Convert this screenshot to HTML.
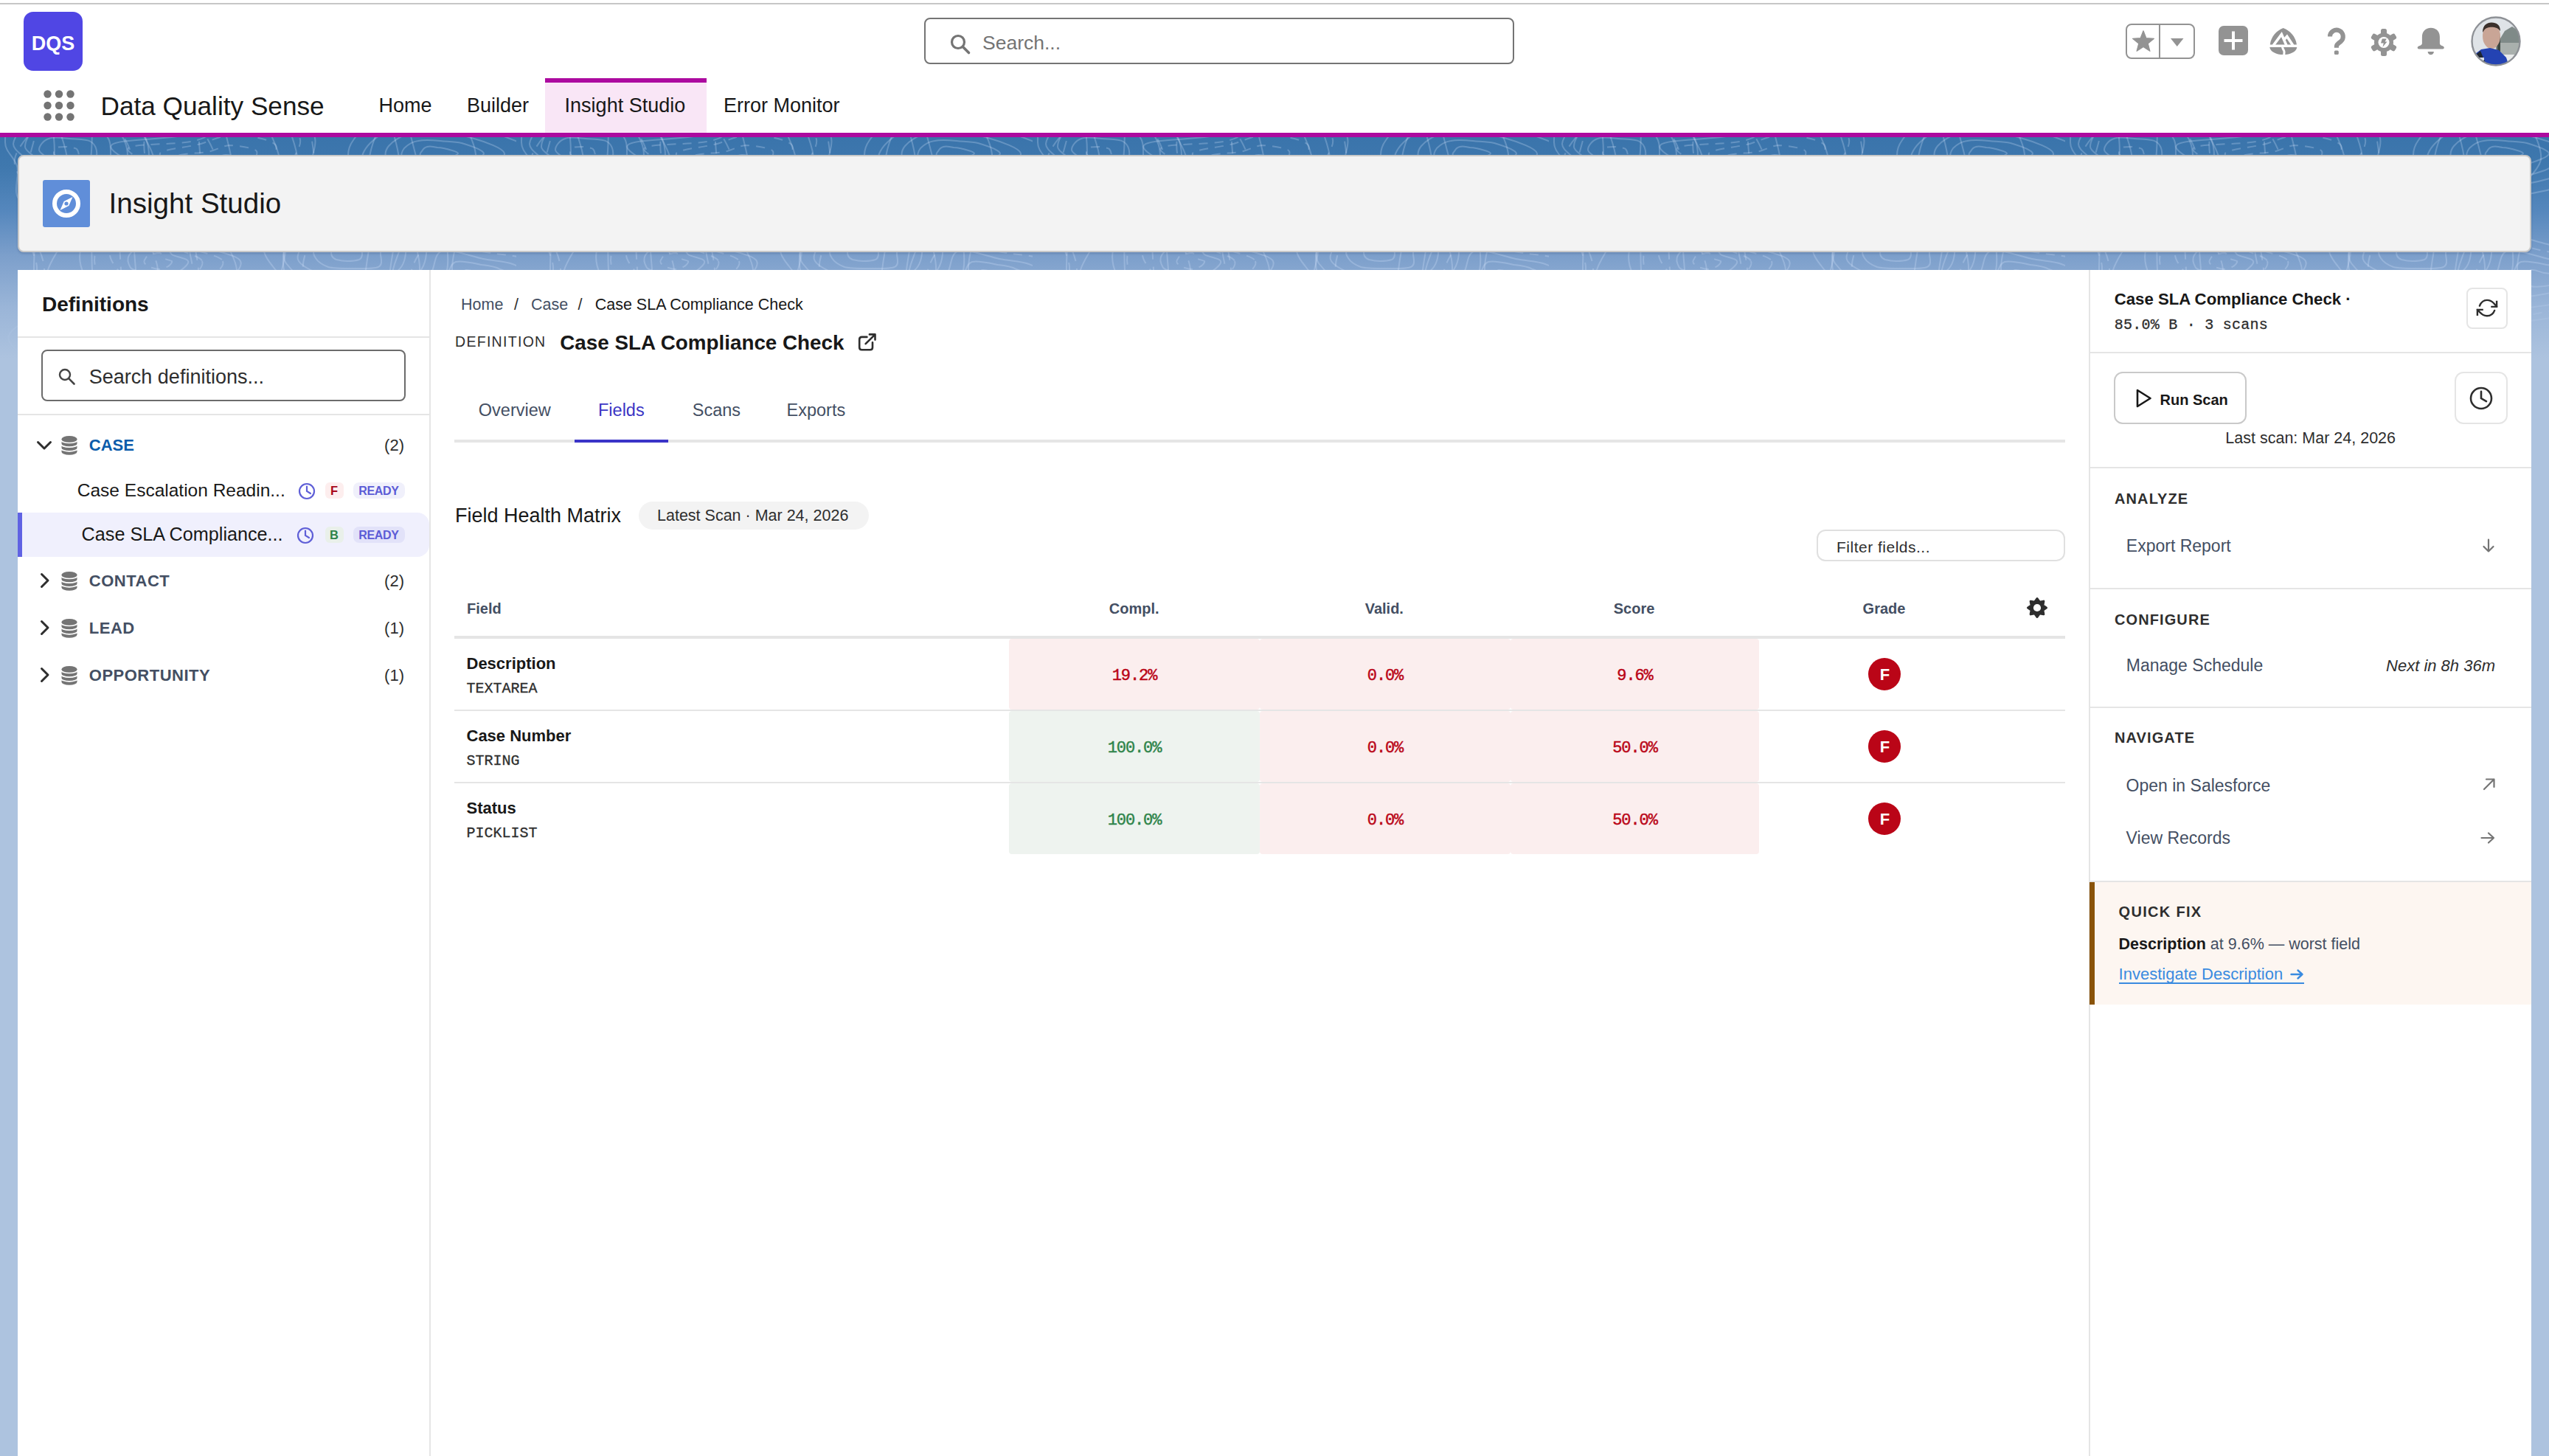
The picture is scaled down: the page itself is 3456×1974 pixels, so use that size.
<!DOCTYPE html>
<html><head><meta charset="utf-8"><title>Insight Studio</title>
<style>
html,body{margin:0;padding:0;}
body{width:3456px;height:1974px;position:relative;overflow:hidden;background:#fff;font-family:"Liberation Sans", sans-serif;}
.t{position:absolute;white-space:nowrap;line-height:1;}
svg{overflow:visible;}
@media (max-width: 2400px){body{zoom:0.5;}}
</style></head><body>
<div style="position:absolute;left:0px;top:186px;width:3456px;height:1788px;background:linear-gradient(180deg,#3a74ab 0px,#3f78ae 40px,#5587bd 100px,#7c9fcb 160px,#9ab5d8 230px,#adc3df 300px,#adc3df 1788px);"></div>
<div style="position:absolute;left:0px;top:0px;width:3456px;height:180px;background:#fff;"></div>
<div style="position:absolute;left:0px;top:4px;width:3456px;height:2px;background:#c6c6c6;"></div>
<div style="position:absolute;left:0px;top:180px;width:3456px;height:6px;background:#ac0a9f;"></div>
<svg style="position:absolute;left:0;top:186px" width="3456" height="300"><defs><pattern id="topo" x="0" y="0" width="700" height="300" patternUnits="userSpaceOnUse"><g fill="none" stroke="#d8e8ff" stroke-opacity="0.26" stroke-width="2"><path d="M107 25 C106 28 105 31 103 33 C100 35 95 36 91 36 C86 37 79 38 77 36 C75 34 78 30 77 27 C76 25 73 24 73 22 C73 19 74 15 77 14 C80 13 86 13 91 13 C95 14 101 14 104 16 C106 18 107 22 107 25 Z" stroke-dasharray="12 9"/><path d="M131 25 C130 31 126 38 120 42 C114 46 104 49 95 50 C86 51 71 51 66 48 C61 44 67 35 65 30 C63 25 53 22 53 17 C53 12 59 4 66 2 C73 -1 84 1 94 2 C103 3 117 2 123 6 C130 10 132 19 131 25 Z"/><path d="M150 25 C150 35 152 48 144 54 C135 61 114 62 98 63 C83 65 60 68 52 63 C45 58 55 41 52 33 C49 25 34 20 34 13 C34 5 41 -9 52 -13 C63 -18 83 -16 98 -14 C113 -12 134 -10 142 -4 C151 3 150 15 150 25 Z"/><path d="M173 25 C173 37 168 52 156 60 C144 69 120 72 101 74 C83 76 54 78 44 72 C34 65 43 46 39 36 C35 25 18 19 18 9 C19 -0 30 -16 44 -22 C58 -28 83 -27 102 -26 C120 -24 144 -19 156 -11 C168 -3 173 13 173 25 Z"/><path d="M202 25 C201 41 193 61 177 72 C161 82 130 86 105 88 C81 91 43 96 29 87 C15 79 27 53 23 39 C19 26 7 20 7 7 C7 -7 8 -36 25 -43 C41 -49 78 -36 104 -33 C130 -30 163 -33 179 -23 C195 -13 202 9 202 25 Z"/><path d="M321 36 C321 38 322 41 319 42 C316 44 308 43 304 43 C299 43 296 43 293 42 C289 42 288 40 285 38 C282 37 272 33 273 31 C274 29 286 29 292 28 C297 27 301 24 306 24 C311 24 319 26 321 28 C324 30 322 33 321 36 Z"/><path d="M343 36 C342 41 345 48 339 50 C333 53 317 51 307 51 C298 51 289 52 282 51 C275 49 272 46 265 42 C258 38 237 29 240 26 C242 22 269 22 281 20 C293 18 300 12 311 11 C321 11 341 14 347 18 C352 22 344 30 343 36 Z" stroke-dasharray="12 9"/><path d="M366 36 C363 44 367 53 358 58 C349 62 325 60 310 60 C296 60 283 61 272 59 C261 56 256 51 247 45 C238 39 214 28 217 22 C221 16 252 14 268 10 C285 6 299 -3 316 -3 C333 -3 364 2 372 9 C380 15 368 28 366 36 Z" stroke-dasharray="12 9"/><path d="M395 36 C392 48 399 63 386 68 C372 73 333 68 313 67 C293 67 279 68 265 64 C251 61 245 56 229 48 C214 39 168 22 174 15 C179 8 238 11 263 5 C287 0 298 -15 321 -16 C345 -18 390 -12 403 -3 C415 6 398 24 395 36 Z" stroke-dasharray="12 9"/><path d="M422 36 C420 50 427 70 409 77 C392 84 343 77 317 77 C291 76 271 78 253 74 C235 69 227 61 210 51 C193 40 144 20 151 11 C158 2 222 4 252 -3 C281 -10 300 -32 328 -33 C356 -34 404 -21 420 -10 C435 2 423 21 422 36 Z"/><path d="M621 22 C621 24 612 27 607 29 C603 30 599 31 594 32 C589 33 581 33 577 32 C573 31 571 27 570 25 C569 23 570 21 572 19 C573 17 575 14 579 13 C582 12 589 13 593 14 C598 14 601 15 606 16 C610 17 621 20 621 22 Z"/><path d="M656 22 C656 27 637 33 628 36 C618 40 610 43 599 44 C588 46 570 47 561 45 C552 42 547 34 545 29 C543 24 545 19 548 15 C552 11 559 6 567 5 C576 3 587 4 597 5 C606 6 616 6 626 8 C636 11 655 17 656 22 Z"/><path d="M684 22 C686 29 663 39 650 45 C636 50 621 54 603 56 C586 58 560 60 546 56 C533 52 528 40 525 33 C521 25 522 18 527 12 C532 6 543 -2 556 -5 C568 -8 586 -6 601 -5 C615 -4 629 -3 643 2 C657 6 683 15 684 22 Z"/><path d="M724 22 C725 32 689 45 669 52 C650 59 630 63 607 66 C584 69 550 73 531 68 C511 64 497 48 492 38 C487 28 494 16 502 8 C511 -1 526 -11 543 -15 C560 -18 584 -17 605 -15 C625 -14 646 -13 666 -7 C686 -0 724 12 724 22 Z"/><path d="M766 22 C768 34 718 51 692 60 C666 70 641 76 612 79 C583 82 539 86 516 79 C494 73 482 53 476 41 C470 28 471 15 479 4 C487 -8 504 -24 526 -28 C547 -32 581 -25 608 -23 C634 -20 657 -21 684 -13 C710 -6 765 10 766 22 Z"/><path d="M233 168 C234 170 230 174 228 175 C225 177 221 179 217 179 C213 179 209 178 206 177 C202 176 198 174 197 172 C195 170 195 167 197 165 C198 162 201 160 205 159 C208 158 214 157 217 157 C220 158 220 162 222 164 C225 166 232 167 233 168 Z" stroke-dasharray="12 9"/><path d="M255 168 C257 172 247 179 242 183 C236 186 228 191 220 191 C213 192 205 188 198 185 C190 183 181 181 177 177 C174 172 172 165 175 160 C178 155 186 150 194 147 C202 145 215 142 221 143 C228 145 227 154 233 159 C239 163 254 164 255 168 Z"/><path d="M274 168 C277 175 266 185 258 191 C250 197 236 203 224 204 C212 205 198 200 188 196 C177 192 167 187 160 180 C154 173 146 161 150 154 C154 147 172 141 184 137 C197 134 214 130 224 133 C234 136 237 147 245 153 C253 158 272 162 274 168 Z" stroke-dasharray="12 9"/><path d="M302 168 C306 177 285 190 273 199 C261 207 245 217 228 219 C212 220 191 214 176 209 C160 203 142 196 134 186 C127 176 126 161 132 150 C138 140 155 129 171 124 C187 118 215 112 229 116 C243 120 242 139 254 148 C267 156 299 160 302 168 Z" stroke-dasharray="12 9"/><path d="M326 168 C331 179 306 197 291 208 C275 219 254 233 233 235 C212 237 185 227 166 219 C146 212 125 202 117 190 C108 178 105 159 112 146 C119 133 140 118 160 111 C179 105 214 103 231 108 C248 114 247 133 263 143 C279 153 322 158 326 168 Z"/><path d="M491 158 C491 160 491 164 487 166 C484 167 476 168 471 168 C466 168 460 167 456 166 C453 165 451 163 450 161 C449 159 449 157 449 155 C449 152 448 147 452 146 C455 145 464 148 470 149 C477 149 485 148 488 150 C491 151 491 155 491 158 Z"/><path d="M516 158 C516 164 520 172 513 176 C506 179 486 178 475 178 C463 178 452 178 445 176 C437 173 431 169 428 164 C425 160 424 156 426 151 C427 146 430 137 438 135 C446 133 462 137 475 138 C487 138 506 137 512 140 C519 144 516 152 516 158 Z"/><path d="M550 158 C549 167 546 179 534 184 C522 189 495 188 478 188 C462 188 445 188 433 185 C421 181 409 174 405 168 C401 162 406 156 408 148 C410 140 407 123 419 119 C431 116 458 125 479 127 C499 129 529 124 541 129 C553 135 551 149 550 158 Z"/><path d="M578 158 C577 170 572 185 556 192 C541 200 506 201 484 201 C461 202 436 200 420 195 C404 190 394 179 388 171 C383 163 384 155 387 144 C389 134 389 113 405 108 C421 103 457 114 483 116 C510 118 548 113 564 120 C580 127 579 146 578 158 Z"/><path d="M607 158 C608 173 608 196 587 204 C567 212 516 207 486 207 C456 207 428 210 409 204 C389 199 377 185 369 174 C360 163 355 154 358 140 C360 125 360 96 382 90 C403 84 454 101 487 105 C521 109 562 105 581 114 C601 122 606 143 607 158 Z"/><path d="M668 192 C669 194 668 197 664 199 C661 201 655 201 649 202 C644 202 636 204 632 202 C629 201 628 197 627 195 C626 192 625 191 626 188 C627 186 628 181 632 180 C636 179 644 183 649 184 C653 185 657 184 660 186 C663 187 668 189 668 192 Z"/><path d="M698 192 C699 196 691 203 683 206 C676 210 665 210 653 212 C642 214 625 218 616 216 C608 213 604 204 603 199 C601 194 604 190 607 185 C610 180 611 171 618 169 C626 167 643 171 653 173 C663 174 671 175 678 179 C686 182 697 187 698 192 Z"/><path d="M721 192 C723 199 717 210 707 216 C697 222 677 224 659 227 C641 229 611 235 598 231 C585 227 583 211 581 203 C579 194 583 189 586 181 C590 173 589 157 600 154 C612 151 640 162 655 165 C671 168 684 168 695 172 C706 176 719 184 721 192 Z"/><path d="M758 192 C760 201 738 214 722 222 C706 229 685 231 662 235 C638 239 598 249 582 244 C565 239 569 217 565 205 C561 194 555 187 559 177 C563 166 571 147 588 144 C604 141 638 153 659 156 C680 160 696 159 712 165 C729 171 757 182 758 192 Z" stroke-dasharray="12 9"/><path d="M776 192 C779 203 763 222 745 231 C727 240 694 241 665 244 C637 248 595 256 574 250 C553 244 544 223 538 210 C531 197 530 186 535 172 C540 159 546 132 568 128 C589 123 636 142 662 147 C689 153 708 152 727 159 C746 167 773 180 776 192 Z"/><path d="M151 290 C150 292 144 295 140 296 C137 297 133 296 128 297 C124 298 117 301 114 300 C111 299 112 295 111 293 C110 290 106 288 107 286 C108 284 112 283 116 281 C120 280 126 277 130 277 C135 278 139 281 142 283 C146 285 151 288 151 290 Z" stroke-dasharray="12 9"/><path d="M183 290 C182 295 166 301 157 303 C149 306 141 303 131 305 C122 306 107 313 101 312 C95 310 98 300 96 295 C93 290 83 286 84 282 C86 278 95 273 104 270 C112 267 125 263 135 264 C145 264 154 270 162 274 C170 279 183 285 183 290 Z"/><path d="M208 290 C208 297 188 307 175 311 C163 315 149 311 134 313 C119 315 97 326 87 324 C78 321 84 306 79 298 C75 291 60 285 62 278 C63 271 77 264 90 258 C104 253 126 245 141 247 C155 249 166 261 177 268 C188 275 209 283 208 290 Z" stroke-dasharray="12 9"/><path d="M248 290 C246 300 210 312 191 318 C173 323 157 322 138 324 C119 327 91 336 78 332 C65 328 65 312 58 302 C51 293 32 282 36 273 C40 265 64 258 82 251 C101 245 126 234 145 235 C164 236 182 250 199 259 C216 268 249 280 248 290 Z"/><path d="M267 290 C265 302 223 315 202 322 C181 330 165 329 141 333 C118 338 78 351 61 347 C44 342 46 319 38 306 C30 293 7 280 12 269 C16 257 43 245 66 237 C89 229 126 216 151 219 C176 221 198 239 217 251 C237 263 270 278 267 290 Z"/><path d="M431 298 C430 300 429 301 426 303 C424 304 421 306 418 306 C414 306 411 305 407 304 C402 303 392 304 390 302 C388 300 393 297 395 295 C397 292 398 288 402 288 C406 287 412 290 417 291 C422 292 429 290 432 291 C434 292 432 296 431 298 Z" stroke-dasharray="12 9"/><path d="M449 298 C448 302 445 305 440 308 C435 311 428 314 421 315 C414 316 408 313 398 311 C388 310 366 310 361 307 C357 303 366 295 370 290 C375 286 380 279 389 277 C397 276 410 281 421 282 C431 283 445 282 450 284 C454 287 451 294 449 298 Z"/><path d="M471 298 C469 304 464 309 456 314 C448 319 436 324 425 325 C413 326 401 323 386 321 C371 318 341 317 334 311 C327 306 338 294 345 286 C351 278 360 267 373 265 C386 263 407 272 424 274 C440 276 463 272 471 276 C479 280 474 292 471 298 Z" stroke-dasharray="12 9"/><path d="M486 298 C482 306 475 312 465 318 C456 324 442 332 428 334 C414 335 402 328 381 325 C360 322 312 324 301 317 C290 310 307 292 316 281 C326 271 340 255 358 253 C377 250 404 264 426 267 C448 270 479 264 489 269 C499 274 490 290 486 298 Z"/><path d="M512 298 C507 309 499 318 485 325 C472 333 450 341 431 342 C412 344 398 336 371 333 C343 330 280 332 266 323 C253 314 279 291 291 277 C304 263 318 242 341 239 C364 236 400 255 429 258 C458 262 501 252 514 259 C528 266 517 287 512 298 Z" stroke-dasharray="12 9"/><path d="M53 -20 C50 -12 44 13 39 30 C35 47 25 63 26 80 C27 97 39 113 44 130 C50 147 60 163 60 180 C60 197 47 213 43 230 C39 247 40 263 37 280 C35 297 30 322 28 330 " stroke-dasharray="16 10"/><path d="M629 -20 C632 -12 647 13 645 30 C642 47 617 63 613 80 C609 97 620 113 620 130 C620 147 612 163 613 180 C614 197 625 213 625 230 C626 247 614 263 613 280 C612 297 619 322 620 330 "/><path d="M198 -20 C198 -12 192 13 198 30 C203 47 230 63 231 80 C232 97 205 113 203 130 C200 147 213 163 214 180 C216 197 211 213 211 230 C211 247 217 263 215 280 C213 297 202 322 199 330 " stroke-dasharray="16 10"/><path d="M77 -20 C79 -12 90 13 91 30 C91 47 80 63 79 80 C79 97 91 113 88 130 C86 147 70 163 65 180 C60 197 56 213 58 230 C60 247 74 263 77 280 C80 297 75 322 75 330 "/><path d="M268 -20 C269 -12 270 13 272 30 C273 47 281 63 279 80 C276 97 259 113 257 130 C254 147 259 163 262 180 C265 197 277 213 275 230 C274 247 258 263 254 280 C249 297 250 322 250 330 " stroke-dasharray="16 10"/><path d="M71 -20 C71 -12 76 13 73 30 C70 47 59 63 55 80 C50 97 49 113 48 130 C47 147 46 163 46 180 C47 197 52 213 52 230 C52 247 45 263 46 280 C47 297 57 322 59 330 "/><path d="M156 -20 C160 -12 179 13 179 30 C179 47 159 63 155 80 C152 97 160 113 161 130 C162 147 163 163 164 180 C165 197 168 213 167 230 C166 247 157 263 157 280 C158 297 167 322 169 330 " stroke-dasharray="16 10"/><path d="M529 -20 C531 -12 540 13 541 30 C541 47 533 63 532 80 C531 97 536 113 536 130 C535 147 531 163 529 180 C527 197 523 213 525 230 C526 247 537 263 538 280 C539 297 533 322 532 330 "/><path d="M517 -20 C514 -12 501 13 501 30 C502 47 520 63 521 80 C522 97 509 113 505 130 C501 147 498 163 496 180 C494 197 494 213 494 230 C494 247 497 263 498 280 C499 297 501 322 501 330 "/><path d="M184 -20 C188 -12 206 13 209 30 C212 47 206 63 202 80 C198 97 186 113 183 130 C180 147 183 163 184 180 C184 197 185 213 187 230 C188 247 190 263 195 280 C199 297 210 322 213 330 "/><path d="M419 -20 C420 -12 425 13 426 30 C427 47 424 63 423 80 C423 97 424 113 422 130 C420 147 409 163 411 180 C412 197 427 213 431 230 C436 247 439 263 440 280 C441 297 437 322 437 330 " stroke-dasharray="16 10"/><path d="M359 -20 C363 -12 377 13 379 30 C380 47 368 63 369 80 C371 97 385 113 387 130 C389 147 387 163 382 180 C377 197 360 213 357 230 C355 247 360 263 365 280 C369 297 383 322 386 330 "/><path d="M302 -20 C304 -12 311 13 314 30 C317 47 321 63 320 80 C318 97 305 113 305 130 C305 147 320 163 321 180 C321 197 313 213 307 230 C302 247 288 263 290 280 C291 297 311 322 315 330 "/><path d="M54 -20 C48 -12 22 13 20 30 C17 47 37 63 39 80 C42 97 34 113 36 130 C38 147 51 163 50 180 C50 197 37 213 33 230 C29 247 27 263 26 280 C26 297 28 322 29 330 " stroke-dasharray="16 10"/><path d="M389 -20 C391 -12 403 13 403 30 C402 47 387 63 384 80 C382 97 388 113 388 130 C388 147 381 163 385 180 C388 197 408 213 411 230 C415 247 407 263 406 280 C405 297 406 322 406 330 "/><path d="M268 -20 C272 -12 290 13 293 30 C295 47 285 63 280 80 C275 97 266 113 264 130 C262 147 268 163 269 180 C269 197 263 213 266 230 C269 247 284 263 288 280 C293 297 294 322 295 330 " stroke-dasharray="16 10"/><path d="M552 -20 C554 -12 561 13 565 30 C568 47 571 63 571 80 C571 97 563 113 562 130 C562 147 570 163 569 180 C567 197 558 213 553 230 C549 247 539 263 540 280 C541 297 555 322 558 330 "/><path d="M125 -20 C125 -12 125 13 123 30 C121 47 112 63 112 80 C112 97 120 113 123 130 C125 147 124 163 125 180 C126 197 127 213 128 230 C130 247 137 263 137 280 C136 297 128 322 126 330 "/></g></pattern><linearGradient id="fade" x1="0" y1="0" x2="0" y2="1"><stop offset="0" stop-color="#fff"/><stop offset="0.6" stop-color="#fff"/><stop offset="1" stop-color="#000"/></linearGradient><mask id="fm"><rect width="3456" height="300" fill="url(#fade)"/></mask></defs><rect width="3456" height="300" fill="url(#topo)" mask="url(#fm)"/></svg>
<div style="position:absolute;left:32px;top:16px;width:80px;height:80px;background:#5046e4;border-radius:13px;"></div>
<div class="t" style="left:-928px;width:2000px;text-align:center;top:46.43px;font-size:27px;color:#fff;font-weight:700;font-family:'Liberation Sans', sans-serif;letter-spacing:0px;font-style:normal;">DQS</div>
<svg style="position:absolute;left:59px;top:122px;" width="42" height="42" viewBox="0 0 42 42"><circle cx="5.5" cy="5.5" r="5.2" fill="#747474"/><circle cx="5.5" cy="21" r="5.2" fill="#747474"/><circle cx="5.5" cy="36.5" r="5.2" fill="#747474"/><circle cx="21" cy="5.5" r="5.2" fill="#747474"/><circle cx="21" cy="21" r="5.2" fill="#747474"/><circle cx="21" cy="36.5" r="5.2" fill="#747474"/><circle cx="36.5" cy="5.5" r="5.2" fill="#747474"/><circle cx="36.5" cy="21" r="5.2" fill="#747474"/><circle cx="36.5" cy="36.5" r="5.2" fill="#747474"/></svg>
<div class="t" style="left:136.5px;top:125.96px;font-size:35.2px;color:#181818;font-weight:400;font-family:'Liberation Sans', sans-serif;letter-spacing:0px;font-style:normal;">Data Quality Sense</div>
<div style="position:absolute;left:739px;top:106px;width:219px;height:6px;background:#ac0a9f;"></div>
<div style="position:absolute;left:739px;top:112px;width:219px;height:68px;background:#f9e6f6;"></div>
<div class="t" style="left:513.5px;top:130.32px;font-size:27px;color:#181818;font-weight:400;font-family:'Liberation Sans', sans-serif;letter-spacing:0px;font-style:normal;">Home</div>
<div class="t" style="left:633px;top:130.32px;font-size:27px;color:#181818;font-weight:400;font-family:'Liberation Sans', sans-serif;letter-spacing:0px;font-style:normal;">Builder</div>
<div class="t" style="left:765.6px;top:130.32px;font-size:27px;color:#181818;font-weight:400;font-family:'Liberation Sans', sans-serif;letter-spacing:0px;font-style:normal;">Insight Studio</div>
<div class="t" style="left:981px;top:130.32px;font-size:27px;color:#181818;font-weight:400;font-family:'Liberation Sans', sans-serif;letter-spacing:0px;font-style:normal;">Error Monitor</div>
<div style="position:absolute;left:1253px;top:24px;width:800px;height:63px;box-sizing:border-box;border:2px solid #747474;border-radius:8px;background:#fff;"></div>
<svg style="position:absolute;left:1288px;top:46px;" width="28" height="26" viewBox="0 0 28 26"><circle cx="11" cy="11" r="8.5" fill="none" stroke="#747474" stroke-width="3.2"/><line x1="17.5" y1="17.5" x2="25.5" y2="25.5" stroke="#747474" stroke-width="3.6" stroke-linecap="round"/></svg>
<div class="t" style="left:1332px;top:45.14px;font-size:26.5px;color:#747474;font-weight:400;font-family:'Liberation Sans', sans-serif;letter-spacing:0px;font-style:normal;">Search...</div>
<div style="position:absolute;left:2882px;top:32px;width:94px;height:48px;box-sizing:border-box;border:2px solid #939393;border-radius:8px;"></div>
<div style="position:absolute;left:2927px;top:32px;width:2px;height:48px;background:#939393;"></div>
<svg style="position:absolute;left:2891px;top:41px;" width="30" height="30" viewBox="0 0 30 30"><path d="M15.00 0.80 L18.88 10.66 L29.46 11.30 L21.28 18.04 L23.93 28.30 L15.00 22.60 L6.07 28.30 L8.72 18.04 L0.54 11.30 L11.12 10.66 Z" fill="#939393" stroke="#939393" stroke-width="1.2" stroke-linejoin="round"/></svg>
<svg style="position:absolute;left:2943px;top:52px;" width="18" height="12" viewBox="0 0 18 12"><path d="M0 0 L17.5 0 L8.75 11 Z" fill="#939393"/></svg>
<svg style="position:absolute;left:3008px;top:35px;" width="40" height="40" viewBox="0 0 40 40"><rect x="0" y="0" width="40" height="40" rx="7" fill="#939393"/><rect x="18" y="7.5" width="4" height="25" fill="#fff"/><rect x="7.5" y="18" width="25" height="4" fill="#fff"/></svg>
<svg style="position:absolute;left:3077px;top:37px;" width="38" height="38" viewBox="0 0 38 38"><path d="M0.8 23.6 C2 12.5 9.5 4.5 18.7 1 C27.9 4.5 35.6 12.5 36.9 23.6 Z" fill="#939393"/><path d="M0.3 26.9 L37.3 26.9 C36.5 33 28.5 37 18.7 37 C9 37 1.2 33 0.3 26.9 Z" fill="#939393"/><path d="M5.3 24.5 L16.4 9.6 L23 24.5 M19.6 17 L23.8 12.4 L31.8 24.5" fill="none" stroke="#fff" stroke-width="3.6" stroke-linejoin="miter"/><path d="M17.6 26 C17 29 19.8 30.5 20 33 C20.2 35 19.6 36 19.8 38" fill="none" stroke="#fff" stroke-width="3"/></svg>
<svg style="position:absolute;left:3150px;top:30px;" width="40" height="50" viewBox="0 0 40 50"><path d="M9 19.6 A8.9 8.9 0 1 1 23.6 26.4 C20.5 28.5 17.9 30 17.9 33 L17.9 34.8" fill="none" stroke="#939393" stroke-width="6.1"/><rect x="14.9" y="38.6" width="5.9" height="5.5" rx="1.6" fill="#939393"/></svg>
<svg style="position:absolute;left:3214px;top:39px;" width="36" height="38" viewBox="0 0 36 38"><g fill="#939393"><rect x="14" y="0" width="8" height="9" rx="2.5" transform="rotate(0 18 18.5)"/><rect x="14" y="0" width="8" height="9" rx="2.5" transform="rotate(60 18 18.5)"/><rect x="14" y="0" width="8" height="9" rx="2.5" transform="rotate(120 18 18.5)"/><rect x="14" y="0" width="8" height="9" rx="2.5" transform="rotate(180 18 18.5)"/><rect x="14" y="0" width="8" height="9" rx="2.5" transform="rotate(240 18 18.5)"/><rect x="14" y="0" width="8" height="9" rx="2.5" transform="rotate(300 18 18.5)"/><circle cx="18" cy="18.5" r="13"/></g><circle cx="18" cy="18.5" r="7.5" fill="#fff"/><path d="M15.8 13.4 L21.8 13.4 L19.6 17.6 L22.5 17.6 L16.5 24.8 L17.8 19.6 L14 19.6 Z" fill="#939393"/></svg>
<svg style="position:absolute;left:3277px;top:37px;" width="38" height="38" viewBox="0 0 38 38"><path d="M18.9 0.8 C11.5 0.8 6.9 6 6.9 13 L6.9 22 C6.9 23.5 5 24.5 3 25.3 C1.5 25.8 0.7 26.7 0.7 27.6 C0.7 28.8 1.5 29.5 2.8 29.5 L34.8 29.5 C36 29.5 36.8 28.8 36.8 27.6 C36.8 26.7 36 25.8 34.6 25.3 C32.6 24.5 30.9 23.5 30.9 22 L30.9 13 C30.9 6 26.3 0.8 18.9 0.8 Z" fill="#939393"/><path d="M14.6 33 L22.9 33 C22.9 35.5 21 37.3 18.75 37.3 C16.5 37.3 14.6 35.5 14.6 33 Z" fill="#939393"/></svg>
<svg style="position:absolute;left:3350px;top:22px;" width="68" height="68" viewBox="0 0 68 68"><defs><clipPath id="avc"><circle cx="34" cy="34" r="32.5"/></clipPath></defs><g clip-path="url(#avc)"><rect width="68" height="68" fill="#dfe3e7"/><path d="M34 40 L46 20 L56 14 L68 22 L68 52 L34 52 Z" fill="#7f8a88"/><rect x="36" y="36" width="32" height="16" fill="#a9b0ad"/><rect x="40" y="52" width="28" height="16" fill="#e9ebeb"/><path d="M36 28 L40 26 L40 60 L36 60 Z" fill="#3d4640"/><ellipse cx="28" cy="27" rx="12" ry="17" fill="#c9a596"/><path d="M16 22 C16 12 22 8.5 28 8.5 C35 8.5 40 12 40 20 L38 18 C35 14 22 13 18 19 Z" fill="#3b302b"/><path d="M0 68 L2 54 L14 45 L26 43 L38 46 L48 56 L52 68 Z" fill="#2443b3"/><path d="M2 56 L13 47 L22 68 L2 68 Z" fill="#1e2530"/><rect x="11" y="56" width="7" height="4" fill="#d8dde6"/></g><circle cx="34" cy="34" r="32.5" fill="none" stroke="#8e9196" stroke-width="2.4"/></svg>
<div style="position:absolute;left:24px;top:210px;width:3408px;height:131.5px;box-sizing:border-box;background:#f3f3f3;border:2px solid #c9c9c9;border-radius:8px;box-shadow:0 2px 3px rgba(20,40,80,0.18);"></div>
<div style="position:absolute;left:58px;top:244px;width:64px;height:64px;background:#608ed9;border-radius:3px;"></div>
<svg style="position:absolute;left:58px;top:244px;" width="64" height="64" viewBox="0 0 64 64"><circle cx="32" cy="32" r="16" fill="none" stroke="#fff" stroke-width="6"/><path d="M23.5 41 L28.7 28.9 L40.5 23 L35.3 35.1 Z" fill="#fff"/><circle cx="32" cy="32" r="2.6" fill="#608ed9"/></svg>
<div class="t" style="left:147.5px;top:256.75px;font-size:38.6px;color:#181818;font-weight:400;font-family:'Liberation Sans', sans-serif;letter-spacing:0px;font-style:normal;">Insight Studio</div>
<div style="position:absolute;left:24px;top:366px;width:3408px;height:1608px;background:#fff;"></div>
<div style="position:absolute;left:582px;top:366px;width:2px;height:1608px;background:#e5e5e5;"></div>
<div style="position:absolute;left:2832px;top:366px;width:2px;height:1608px;background:#e5e5e5;"></div>
<div class="t" style="left:57px;top:399.30px;font-size:28px;color:#181818;font-weight:700;font-family:'Liberation Sans', sans-serif;letter-spacing:0px;font-style:normal;">Definitions</div>
<div style="position:absolute;left:24px;top:456px;width:558px;height:2px;background:#e5e5e5;"></div>
<div style="position:absolute;left:56px;top:474px;width:494px;height:70px;box-sizing:border-box;border:2px solid #6b6b6b;border-radius:8px;"></div>
<svg style="position:absolute;left:79px;top:499px;" width="23" height="23" viewBox="0 0 23 23"><circle cx="9" cy="9" r="7" fill="none" stroke="#444" stroke-width="2.4"/><line x1="14.2" y1="14.2" x2="21.5" y2="21.5" stroke="#444" stroke-width="2.6" stroke-linecap="round"/></svg>
<div class="t" style="left:120.8px;top:497.73px;font-size:27px;color:#2e2e2e;font-weight:400;font-family:'Liberation Sans', sans-serif;letter-spacing:0px;font-style:normal;">Search definitions...</div>
<div style="position:absolute;left:24px;top:561px;width:558px;height:2px;background:#e5e5e5;"></div>
<svg style="position:absolute;left:50px;top:598px;" width="20" height="12" viewBox="0 0 20 12"><path d="M1.5 1.5 L10 10 L18.5 1.5" fill="none" stroke="#2e2e2e" stroke-width="3" stroke-linecap="round" stroke-linejoin="round"/></svg>
<svg style="position:absolute;left:83px;top:591px;" width="22" height="26" viewBox="0 0 22 26"><path d="M0.5 4.3 A10.5 4.3 0 0 1 21.5 4.3 L21.5 21.5 A10.5 4.3 0 0 1 0.5 21.5 Z" fill="#747474"/><g fill="none" stroke="#fff" stroke-width="1.7"><path d="M-0.5 5.0 A11.5 4.5 0 0 0 22.5 5.0"/><path d="M-0.5 10.7 A11.5 4.5 0 0 0 22.5 10.7"/><path d="M-0.5 16.4 A11.5 4.5 0 0 0 22.5 16.4"/></g></svg>
<div class="t" style="left:120.8px;top:592.85px;font-size:22px;color:#0b5cab;font-weight:700;font-family:'Liberation Sans', sans-serif;letter-spacing:0px;font-style:normal;">CASE</div>
<div class="t" style="left:-1452px;width:2000px;text-align:right;top:592.85px;font-size:22px;color:#2e2e2e;font-weight:400;font-family:'Liberation Sans', sans-serif;letter-spacing:0px;font-style:normal;">(2)</div>
<div class="t" style="left:104.8px;top:652.79px;font-size:24.5px;color:#181818;font-weight:400;font-family:'Liberation Sans', sans-serif;letter-spacing:0px;font-style:normal;">Case Escalation Readin...</div>
<svg style="position:absolute;left:404px;top:654px;" width="24" height="24" viewBox="0 0 24 24"><circle cx="12" cy="12" r="10" fill="none" stroke="#5f5fd7" stroke-width="2.2"/><path d="M12 5.5 L12 12 L17.0 15.0" fill="none" stroke="#5f5fd7" stroke-width="2.2" stroke-linecap="round"/></svg>
<div style="position:absolute;left:440.5px;top:653.5px;width:25px;height:22.5px;background:#fdeeee;border-radius:6px;"></div>
<div class="t" style="left:-547px;width:2000px;text-align:center;top:657.49px;font-size:16.5px;color:#a8071a;font-weight:700;font-family:'Liberation Sans', sans-serif;letter-spacing:0px;font-style:normal;">F</div>
<div style="position:absolute;left:478.5px;top:653.5px;width:70px;height:22.5px;background:rgba(91,91,214,0.09);border-radius:8px;"></div>
<div class="t" style="left:-486.5px;width:2000px;text-align:center;top:657.90px;font-size:16px;color:#5b5bd6;font-weight:700;font-family:'Liberation Sans', sans-serif;letter-spacing:-0.3px;font-style:normal;">READY</div>
<div style="position:absolute;left:24px;top:695px;width:558px;height:60px;background:#f0f0fd;border-radius:0 16px 16px 0;"></div>
<div style="position:absolute;left:24px;top:695px;width:6px;height:60px;background:#6062e3;"></div>
<div class="t" style="left:110.6px;top:712.21px;font-size:25.2px;color:#181818;font-weight:400;font-family:'Liberation Sans', sans-serif;letter-spacing:0px;font-style:normal;">Case SLA Compliance...</div>
<svg style="position:absolute;left:402px;top:714px;" width="24" height="24" viewBox="0 0 24 24"><circle cx="12" cy="12" r="10" fill="none" stroke="#5f5fd7" stroke-width="2.2"/><path d="M12 5.5 L12 12 L17.0 15.0" fill="none" stroke="#5f5fd7" stroke-width="2.2" stroke-linecap="round"/></svg>
<div style="position:absolute;left:440.5px;top:713.5px;width:25px;height:22.5px;background:#e9f0ea;border-radius:6px;"></div>
<div class="t" style="left:-547px;width:2000px;text-align:center;top:717.49px;font-size:16.5px;color:#2e844a;font-weight:700;font-family:'Liberation Sans', sans-serif;letter-spacing:0px;font-style:normal;">B</div>
<div style="position:absolute;left:478.5px;top:713.5px;width:70px;height:22.5px;background:rgba(91,91,214,0.09);border-radius:8px;"></div>
<div class="t" style="left:-486.5px;width:2000px;text-align:center;top:717.90px;font-size:16px;color:#5b5bd6;font-weight:700;font-family:'Liberation Sans', sans-serif;letter-spacing:-0.3px;font-style:normal;">READY</div>
<svg style="position:absolute;left:55px;top:776.7px;" width="12" height="20" viewBox="0 0 12 20"><path d="M1.5 1.5 L10 10 L1.5 18.5" fill="none" stroke="#2e2e2e" stroke-width="3" stroke-linecap="round" stroke-linejoin="round"/></svg>
<svg style="position:absolute;left:83px;top:775px;" width="22" height="26" viewBox="0 0 22 26"><path d="M0.5 4.3 A10.5 4.3 0 0 1 21.5 4.3 L21.5 21.5 A10.5 4.3 0 0 1 0.5 21.5 Z" fill="#747474"/><g fill="none" stroke="#fff" stroke-width="1.7"><path d="M-0.5 5.0 A11.5 4.5 0 0 0 22.5 5.0"/><path d="M-0.5 10.7 A11.5 4.5 0 0 0 22.5 10.7"/><path d="M-0.5 16.4 A11.5 4.5 0 0 0 22.5 16.4"/></g></svg>
<div class="t" style="left:120.8px;top:776.85px;font-size:22px;color:#444f63;font-weight:700;font-family:'Liberation Sans', sans-serif;letter-spacing:0.5px;font-style:normal;">CONTACT</div>
<div class="t" style="left:-1452px;width:2000px;text-align:right;top:776.85px;font-size:22px;color:#2e2e2e;font-weight:400;font-family:'Liberation Sans', sans-serif;letter-spacing:0px;font-style:normal;">(2)</div>
<svg style="position:absolute;left:55px;top:841.1px;" width="12" height="20" viewBox="0 0 12 20"><path d="M1.5 1.5 L10 10 L1.5 18.5" fill="none" stroke="#2e2e2e" stroke-width="3" stroke-linecap="round" stroke-linejoin="round"/></svg>
<svg style="position:absolute;left:83px;top:839.4px;" width="22" height="26" viewBox="0 0 22 26"><path d="M0.5 4.3 A10.5 4.3 0 0 1 21.5 4.3 L21.5 21.5 A10.5 4.3 0 0 1 0.5 21.5 Z" fill="#747474"/><g fill="none" stroke="#fff" stroke-width="1.7"><path d="M-0.5 5.0 A11.5 4.5 0 0 0 22.5 5.0"/><path d="M-0.5 10.7 A11.5 4.5 0 0 0 22.5 10.7"/><path d="M-0.5 16.4 A11.5 4.5 0 0 0 22.5 16.4"/></g></svg>
<div class="t" style="left:120.8px;top:841.25px;font-size:22px;color:#444f63;font-weight:700;font-family:'Liberation Sans', sans-serif;letter-spacing:0.5px;font-style:normal;">LEAD</div>
<div class="t" style="left:-1452px;width:2000px;text-align:right;top:841.25px;font-size:22px;color:#2e2e2e;font-weight:400;font-family:'Liberation Sans', sans-serif;letter-spacing:0px;font-style:normal;">(1)</div>
<svg style="position:absolute;left:55px;top:904.7px;" width="12" height="20" viewBox="0 0 12 20"><path d="M1.5 1.5 L10 10 L1.5 18.5" fill="none" stroke="#2e2e2e" stroke-width="3" stroke-linecap="round" stroke-linejoin="round"/></svg>
<svg style="position:absolute;left:83px;top:903px;" width="22" height="26" viewBox="0 0 22 26"><path d="M0.5 4.3 A10.5 4.3 0 0 1 21.5 4.3 L21.5 21.5 A10.5 4.3 0 0 1 0.5 21.5 Z" fill="#747474"/><g fill="none" stroke="#fff" stroke-width="1.7"><path d="M-0.5 5.0 A11.5 4.5 0 0 0 22.5 5.0"/><path d="M-0.5 10.7 A11.5 4.5 0 0 0 22.5 10.7"/><path d="M-0.5 16.4 A11.5 4.5 0 0 0 22.5 16.4"/></g></svg>
<div class="t" style="left:120.8px;top:904.85px;font-size:22px;color:#444f63;font-weight:700;font-family:'Liberation Sans', sans-serif;letter-spacing:0.5px;font-style:normal;">OPPORTUNITY</div>
<div class="t" style="left:-1452px;width:2000px;text-align:right;top:904.85px;font-size:22px;color:#2e2e2e;font-weight:400;font-family:'Liberation Sans', sans-serif;letter-spacing:0px;font-style:normal;">(1)</div>
<div class="t" style="left:625px;top:402.56px;font-size:21.5px;color:#444f63;font-weight:400;font-family:'Liberation Sans', sans-serif;letter-spacing:0px;font-style:normal;">Home</div>
<div class="t" style="left:697px;top:402.56px;font-size:21.5px;color:#2e2e2e;font-weight:400;font-family:'Liberation Sans', sans-serif;letter-spacing:0px;font-style:normal;">/</div>
<div class="t" style="left:720px;top:402.56px;font-size:21.5px;color:#444f63;font-weight:400;font-family:'Liberation Sans', sans-serif;letter-spacing:0px;font-style:normal;">Case</div>
<div class="t" style="left:783.5px;top:402.56px;font-size:21.5px;color:#2e2e2e;font-weight:400;font-family:'Liberation Sans', sans-serif;letter-spacing:0px;font-style:normal;">/</div>
<div class="t" style="left:806.7px;top:402.56px;font-size:21.5px;color:#181818;font-weight:400;font-family:'Liberation Sans', sans-serif;letter-spacing:0px;font-style:normal;">Case SLA Compliance Check</div>
<div class="t" style="left:617px;top:453.61px;font-size:19.5px;color:#2e2e2e;font-weight:400;font-family:'Liberation Sans', sans-serif;letter-spacing:1.3px;font-style:normal;">DEFINITION</div>
<div class="t" style="left:759.3px;top:451.06px;font-size:27.8px;color:#181818;font-weight:700;font-family:'Liberation Sans', sans-serif;letter-spacing:0px;font-style:normal;">Case SLA Compliance Check</div>
<svg style="position:absolute;left:1163px;top:452px;" width="26" height="24" viewBox="0 0 26 24"><path d="M12.4 4.9 L5.5 4.9 Q2.2 4.9 2.2 8.2 L2.2 19 Q2.2 22.3 5.5 22.3 L16.8 22.3 Q20 22.3 20 19 L20 12.2" fill="none" stroke="#2e2e2e" stroke-width="2.6" stroke-linecap="round"/><path d="M15.9 1.4 L23.5 1.4 L23.5 8.6 M23.3 1.6 L10.6 14.2" fill="none" stroke="#2e2e2e" stroke-width="2.6" stroke-linecap="round" stroke-linejoin="round"/></svg>
<div class="t" style="left:648.8px;top:544.61px;font-size:23.5px;color:#444f63;font-weight:400;font-family:'Liberation Sans', sans-serif;letter-spacing:0px;font-style:normal;">Overview</div>
<div class="t" style="left:811px;top:544.61px;font-size:23.5px;color:#3b35c4;font-weight:400;font-family:'Liberation Sans', sans-serif;letter-spacing:0px;font-style:normal;">Fields</div>
<div class="t" style="left:938.8px;top:544.61px;font-size:23.5px;color:#444f63;font-weight:400;font-family:'Liberation Sans', sans-serif;letter-spacing:0px;font-style:normal;">Scans</div>
<div class="t" style="left:1066.5px;top:544.61px;font-size:23.5px;color:#444f63;font-weight:400;font-family:'Liberation Sans', sans-serif;letter-spacing:0px;font-style:normal;">Exports</div>
<div style="position:absolute;left:616px;top:596px;width:2184px;height:4px;background:#e5e5e5;"></div>
<div style="position:absolute;left:779px;top:596px;width:127px;height:4px;background:#3a34c8;"></div>
<div class="t" style="left:617px;top:685.93px;font-size:27px;color:#181818;font-weight:400;font-family:'Liberation Sans', sans-serif;letter-spacing:0px;font-style:normal;">Field Health Matrix</div>
<div style="position:absolute;left:866px;top:680px;width:312px;height:38px;background:#f3f3f3;border-radius:19px;"></div>
<div class="t" style="left:891px;top:689.26px;font-size:21.5px;color:#2e2e2e;font-weight:400;font-family:'Liberation Sans', sans-serif;letter-spacing:0px;font-style:normal;">Latest Scan · Mar 24, 2026</div>
<div style="position:absolute;left:2463px;top:718px;width:337px;height:43px;box-sizing:border-box;border:2px solid #e0e0e0;border-radius:12px;"></div>
<div class="t" style="left:2490px;top:730.67px;font-size:21px;color:#2e2e2e;font-weight:400;font-family:'Liberation Sans', sans-serif;letter-spacing:0.5px;font-style:normal;">Filter fields...</div>
<div class="t" style="left:633px;top:814.50px;font-size:20px;color:#444f63;font-weight:700;font-family:'Liberation Sans', sans-serif;letter-spacing:0px;font-style:normal;">Field</div>
<div class="t" style="left:537.7px;width:2000px;text-align:center;top:814.50px;font-size:20px;color:#444f63;font-weight:700;font-family:'Liberation Sans', sans-serif;letter-spacing:0px;font-style:normal;">Compl.</div>
<div class="t" style="left:876.8px;width:2000px;text-align:center;top:814.50px;font-size:20px;color:#444f63;font-weight:700;font-family:'Liberation Sans', sans-serif;letter-spacing:0px;font-style:normal;">Valid.</div>
<div class="t" style="left:1215.5px;width:2000px;text-align:center;top:814.50px;font-size:20px;color:#444f63;font-weight:700;font-family:'Liberation Sans', sans-serif;letter-spacing:0px;font-style:normal;">Score</div>
<div class="t" style="left:1554.5px;width:2000px;text-align:center;top:814.50px;font-size:20px;color:#444f63;font-weight:700;font-family:'Liberation Sans', sans-serif;letter-spacing:0px;font-style:normal;">Grade</div>
<svg style="position:absolute;left:2746px;top:808px;" width="32" height="32" viewBox="0 0 32 32"><path d="M16.00 3.60 L19.21 8.24 L24.77 7.23 L23.76 12.79 L28.40 16.00 L23.76 19.21 L24.77 24.77 L19.21 23.76 L16.00 28.40 L12.79 23.76 L7.23 24.77 L8.24 19.21 L3.60 16.00 L8.24 12.79 L7.23 7.23 L12.79 8.24 Z" fill="#2e2e2e" stroke="#2e2e2e" stroke-width="3.2" stroke-linejoin="round"/><circle cx="16" cy="16" r="5.1" fill="#fff"/></svg>
<div style="position:absolute;left:616px;top:862px;width:2184px;height:4px;background:#e5e5e5;"></div>
<div style="position:absolute;left:616px;top:962px;width:2184px;height:2px;background:#e5e5e5;"></div>
<div style="position:absolute;left:616px;top:1060px;width:2184px;height:2px;background:#e5e5e5;"></div>
<div class="t" style="left:632.5px;top:888.55px;font-size:22px;color:#181818;font-weight:700;font-family:'Liberation Sans', sans-serif;letter-spacing:0px;font-style:normal;">Description</div>
<div class="t" style="left:632.5px;top:923.50px;font-size:20px;color:#2e2e2e;font-weight:400;font-family:'Liberation Mono', monospace;letter-spacing:0px;font-style:normal;-webkit-text-stroke:0.3px currentColor;">TEXTAREA</div>
<div style="position:absolute;left:1368px;top:866px;width:340px;height:96px;background:#fbeeee;border-radius:4px;"></div>
<div class="t" style="left:538.0px;width:2000px;text-align:center;top:905.61px;font-size:22px;color:#ba0517;font-weight:400;font-family:'Liberation Mono', monospace;letter-spacing:-1.1px;font-style:normal;-webkit-text-stroke:0.45px currentColor;">19.2%</div>
<div style="position:absolute;left:1708px;top:866px;width:340px;height:96px;background:#fbeeee;border-radius:4px;"></div>
<div class="t" style="left:878.0px;width:2000px;text-align:center;top:905.61px;font-size:22px;color:#ba0517;font-weight:400;font-family:'Liberation Mono', monospace;letter-spacing:-1.1px;font-style:normal;-webkit-text-stroke:0.45px currentColor;">0.0%</div>
<div style="position:absolute;left:2048px;top:866px;width:337px;height:96px;background:#fbeeee;border-radius:4px;"></div>
<div class="t" style="left:1216.5px;width:2000px;text-align:center;top:905.61px;font-size:22px;color:#ba0517;font-weight:400;font-family:'Liberation Mono', monospace;letter-spacing:-1.1px;font-style:normal;-webkit-text-stroke:0.45px currentColor;">9.6%</div>
<div style="position:absolute;left:2532.75px;top:891.7px;width:44px;height:44px;background:#ba0517;border-radius:50%;"></div>
<div class="t" style="left:1555.5px;width:2000px;text-align:center;top:903.85px;font-size:22px;color:#fff;font-weight:700;font-family:'Liberation Sans', sans-serif;letter-spacing:0px;font-style:normal;">F</div>
<div class="t" style="left:632.5px;top:986.55px;font-size:22px;color:#181818;font-weight:700;font-family:'Liberation Sans', sans-serif;letter-spacing:0px;font-style:normal;">Case Number</div>
<div class="t" style="left:632.5px;top:1021.50px;font-size:20px;color:#2e2e2e;font-weight:400;font-family:'Liberation Mono', monospace;letter-spacing:0px;font-style:normal;-webkit-text-stroke:0.3px currentColor;">STRING</div>
<div style="position:absolute;left:1368px;top:964px;width:340px;height:96px;background:#eef3ef;border-radius:4px;"></div>
<div class="t" style="left:538.0px;width:2000px;text-align:center;top:1003.61px;font-size:22px;color:#2e844a;font-weight:400;font-family:'Liberation Mono', monospace;letter-spacing:-1.1px;font-style:normal;-webkit-text-stroke:0.45px currentColor;">100.0%</div>
<div style="position:absolute;left:1708px;top:964px;width:340px;height:96px;background:#fbeeee;border-radius:4px;"></div>
<div class="t" style="left:878.0px;width:2000px;text-align:center;top:1003.61px;font-size:22px;color:#ba0517;font-weight:400;font-family:'Liberation Mono', monospace;letter-spacing:-1.1px;font-style:normal;-webkit-text-stroke:0.45px currentColor;">0.0%</div>
<div style="position:absolute;left:2048px;top:964px;width:337px;height:96px;background:#fbeeee;border-radius:4px;"></div>
<div class="t" style="left:1216.5px;width:2000px;text-align:center;top:1003.61px;font-size:22px;color:#ba0517;font-weight:400;font-family:'Liberation Mono', monospace;letter-spacing:-1.1px;font-style:normal;-webkit-text-stroke:0.45px currentColor;">50.0%</div>
<div style="position:absolute;left:2532.75px;top:989.7px;width:44px;height:44px;background:#ba0517;border-radius:50%;"></div>
<div class="t" style="left:1555.5px;width:2000px;text-align:center;top:1001.85px;font-size:22px;color:#fff;font-weight:700;font-family:'Liberation Sans', sans-serif;letter-spacing:0px;font-style:normal;">F</div>
<div class="t" style="left:632.5px;top:1084.55px;font-size:22px;color:#181818;font-weight:700;font-family:'Liberation Sans', sans-serif;letter-spacing:0px;font-style:normal;">Status</div>
<div class="t" style="left:632.5px;top:1119.50px;font-size:20px;color:#2e2e2e;font-weight:400;font-family:'Liberation Mono', monospace;letter-spacing:0px;font-style:normal;-webkit-text-stroke:0.3px currentColor;">PICKLIST</div>
<div style="position:absolute;left:1368px;top:1062px;width:340px;height:96px;background:#eef3ef;border-radius:4px;"></div>
<div class="t" style="left:538.0px;width:2000px;text-align:center;top:1101.61px;font-size:22px;color:#2e844a;font-weight:400;font-family:'Liberation Mono', monospace;letter-spacing:-1.1px;font-style:normal;-webkit-text-stroke:0.45px currentColor;">100.0%</div>
<div style="position:absolute;left:1708px;top:1062px;width:340px;height:96px;background:#fbeeee;border-radius:4px;"></div>
<div class="t" style="left:878.0px;width:2000px;text-align:center;top:1101.61px;font-size:22px;color:#ba0517;font-weight:400;font-family:'Liberation Mono', monospace;letter-spacing:-1.1px;font-style:normal;-webkit-text-stroke:0.45px currentColor;">0.0%</div>
<div style="position:absolute;left:2048px;top:1062px;width:337px;height:96px;background:#fbeeee;border-radius:4px;"></div>
<div class="t" style="left:1216.5px;width:2000px;text-align:center;top:1101.61px;font-size:22px;color:#ba0517;font-weight:400;font-family:'Liberation Mono', monospace;letter-spacing:-1.1px;font-style:normal;-webkit-text-stroke:0.45px currentColor;">50.0%</div>
<div style="position:absolute;left:2532.75px;top:1087.7px;width:44px;height:44px;background:#ba0517;border-radius:50%;"></div>
<div class="t" style="left:1555.5px;width:2000px;text-align:center;top:1099.85px;font-size:22px;color:#fff;font-weight:700;font-family:'Liberation Sans', sans-serif;letter-spacing:0px;font-style:normal;">F</div>
<div class="t" style="left:2866.7px;top:395.29px;font-size:22.2px;color:#181818;font-weight:700;font-family:'Liberation Sans', sans-serif;letter-spacing:0px;font-style:normal;">Case SLA Compliance Check ·</div>
<div class="t" style="left:2866.7px;top:431.10px;font-size:20px;color:#2e2e2e;font-weight:400;font-family:'Liberation Mono', monospace;letter-spacing:0.25px;font-style:normal;-webkit-text-stroke:0.3px currentColor;">85.0% B · 3 scans</div>
<div style="position:absolute;left:3344px;top:390px;width:56px;height:55.5px;box-sizing:border-box;border:2px solid #e5e5e5;border-radius:8px;"></div>
<svg style="position:absolute;left:3340px;top:385px;" width="65" height="65" viewBox="0 0 65 65"><g fill="none" stroke="#2e2e2e" stroke-width="2.4"><path d="M21.9 29.7 C24 24.5 27.8 21.9 31.9 21.9 C35.5 21.9 38.5 23.5 41 26 L45.1 30.6" stroke-linecap="round"/><path d="M45.1 22.8 L45.1 30.9 L37.3 30.9" stroke-linecap="butt"/><path d="M42.2 35.9 C40.5 40.5 36.5 43.3 31.9 43.3 C28 43.3 25 41.6 22.5 38.6 L18.9 34.9" stroke-linecap="round"/><path d="M26.8 34.9 L18.9 34.9 L18.9 43.1" stroke-linecap="butt"/></g></svg>
<div style="position:absolute;left:2833px;top:477px;width:599px;height:2px;background:#e5e5e5;"></div>
<div style="position:absolute;left:2866px;top:504px;width:180px;height:71px;box-sizing:border-box;border:2px solid #c9c9c9;border-radius:12px;"></div>
<svg style="position:absolute;left:2896px;top:527px;" width="22" height="26" viewBox="0 0 22 26"><path d="M2 2 L19.5 13 L2 24 Z" fill="none" stroke="#181818" stroke-width="2.6" stroke-linejoin="round"/></svg>
<div class="t" style="left:2928.5px;top:531.90px;font-size:20px;color:#181818;font-weight:700;font-family:'Liberation Sans', sans-serif;letter-spacing:0px;font-style:normal;">Run Scan</div>
<div style="position:absolute;left:3328px;top:504px;width:72px;height:71px;box-sizing:border-box;border:2px solid #e5e5e5;border-radius:12px;"></div>
<svg style="position:absolute;left:3348px;top:523.5px;" width="32" height="32" viewBox="0 0 32 32"><circle cx="16" cy="16" r="14" fill="none" stroke="#2e2e2e" stroke-width="2.6"/><path d="M16 6.8999999999999995 L16 16 L23.0 20.2" fill="none" stroke="#2e2e2e" stroke-width="2.6" stroke-linecap="round"/></svg>
<div class="t" style="left:2132.7px;width:2000px;text-align:center;top:584.26px;font-size:21.5px;color:#2e2e2e;font-weight:400;font-family:'Liberation Sans', sans-serif;letter-spacing:0px;font-style:normal;">Last scan: Mar 24, 2026</div>
<div style="position:absolute;left:2833px;top:633px;width:599px;height:2px;background:#e5e5e5;"></div>
<div class="t" style="left:2867px;top:666.10px;font-size:20px;color:#2e2e2e;font-weight:700;font-family:'Liberation Sans', sans-serif;letter-spacing:1.1px;font-style:normal;">ANALYZE</div>
<div class="t" style="left:2882.8px;top:729.23px;font-size:23px;color:#444f63;font-weight:400;font-family:'Liberation Sans', sans-serif;letter-spacing:0px;font-style:normal;">Export Report</div>
<svg style="position:absolute;left:3365px;top:730px;" width="18" height="20" viewBox="0 0 18 20"><path d="M9 1.5 L9 17.5 M2.5 11 L9 17.5 L15.5 11" fill="none" stroke="#747474" stroke-width="2.2" stroke-linecap="round" stroke-linejoin="round"/></svg>
<div style="position:absolute;left:2833px;top:797px;width:599px;height:2px;background:#e5e5e5;"></div>
<div class="t" style="left:2867px;top:830.00px;font-size:20px;color:#2e2e2e;font-weight:700;font-family:'Liberation Sans', sans-serif;letter-spacing:1.1px;font-style:normal;">CONFIGURE</div>
<div class="t" style="left:2882.8px;top:891.02px;font-size:23px;color:#444f63;font-weight:400;font-family:'Liberation Sans', sans-serif;letter-spacing:0px;font-style:normal;">Manage Schedule</div>
<div class="t" style="left:1383px;width:2000px;text-align:right;top:891.85px;font-size:22px;color:#2e2e2e;font-weight:400;font-family:'Liberation Sans', sans-serif;letter-spacing:0px;font-style:italic;">Next in 8h 36m</div>
<div style="position:absolute;left:2833px;top:958px;width:599px;height:2px;background:#e5e5e5;"></div>
<div class="t" style="left:2867px;top:989.50px;font-size:20px;color:#2e2e2e;font-weight:700;font-family:'Liberation Sans', sans-serif;letter-spacing:1.1px;font-style:normal;">NAVIGATE</div>
<div class="t" style="left:2882.6px;top:1053.53px;font-size:23px;color:#444f63;font-weight:400;font-family:'Liberation Sans', sans-serif;letter-spacing:0px;font-style:normal;">Open in Salesforce</div>
<svg style="position:absolute;left:3366px;top:1055px;" width="18" height="17" viewBox="0 0 18 17"><path d="M2 15 L15.5 1.5 M5 1.5 L15.5 1.5 L15.5 12" fill="none" stroke="#747474" stroke-width="2.2" stroke-linecap="round" stroke-linejoin="round"/></svg>
<div class="t" style="left:2882.6px;top:1125.33px;font-size:23px;color:#444f63;font-weight:400;font-family:'Liberation Sans', sans-serif;letter-spacing:0px;font-style:normal;">View Records</div>
<svg style="position:absolute;left:3363px;top:1127px;" width="20" height="18" viewBox="0 0 20 18"><path d="M1.5 9 L18 9 M11 2.5 L18 9 L11 15.5" fill="none" stroke="#747474" stroke-width="2.2" stroke-linecap="round" stroke-linejoin="round"/></svg>
<div style="position:absolute;left:2833px;top:1193.5px;width:599px;height:2px;background:#e5e5e5;"></div>
<div style="position:absolute;left:2833px;top:1195.5px;width:599px;height:166px;background:#fdf6f1;"></div>
<div style="position:absolute;left:2833px;top:1195.5px;width:7px;height:166px;background:#8a5309;"></div>
<div class="t" style="left:2872.6px;top:1225.80px;font-size:20px;color:#2e2e2e;font-weight:700;font-family:'Liberation Sans', sans-serif;letter-spacing:1.3px;font-style:normal;">QUICK FIX</div>
<div class="t" style="left:2872.6px;top:1270.26px;font-size:21.5px;color:#444f63;font-weight:400;font-family:'Liberation Sans', sans-serif;letter-spacing:0px;font-style:normal;"><b style="color:#181818">Description</b> at 9.6% — worst field</div>
<div class="t" style="left:2872.6px;top:1309.85px;font-size:22px;color:#3a8be0;font-weight:400;font-family:'Liberation Sans', sans-serif;letter-spacing:0px;font-style:normal;">Investigate Description</div>
<svg style="position:absolute;left:3105px;top:1314px;" width="19" height="14" viewBox="0 0 19 14"><path d="M1.5 7 L16.5 7 M10.5 1.5 L16.5 7 L10.5 12.5" fill="none" stroke="#3a8be0" stroke-width="2.4" stroke-linecap="round" stroke-linejoin="round"/></svg>
<div style="position:absolute;left:2872.6px;top:1332px;width:251.4px;height:2px;background:#3a8be0;"></div>
</body></html>
